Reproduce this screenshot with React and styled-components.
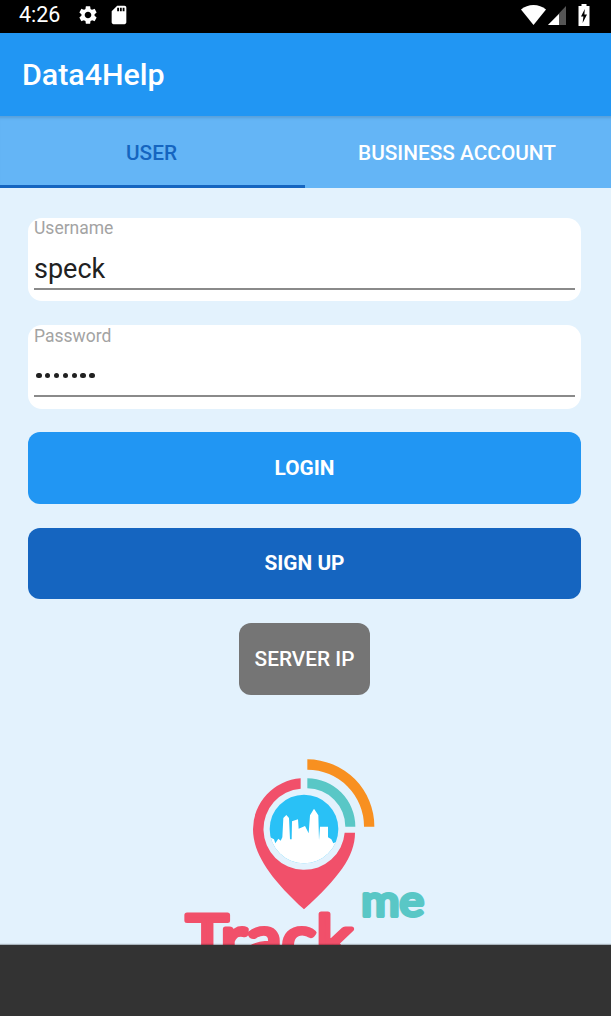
import React from "react";
import styled, { createGlobalStyle } from "styled-components";
import { MdSettings, MdSdCard } from "react-icons/md";

const GlobalStyle = createGlobalStyle`
  html, body {
    margin: 0;
    padding: 0;
    background: #333;
    font-family: Roboto, "Liberation Sans", sans-serif;
  }
  * { box-sizing: border-box; }
`;

const Screen = styled.div`
  width: 611px;
  height: 1016px;
  display: flex;
  flex-direction: column;
  overflow: hidden;
`;

const StatusBar = styled.div`
  height: 33px;
  flex: none;
  background: #000;
  color: #fff;
  display: flex;
  align-items: center;
  padding: 0 21px 4px 19px;
`;

const Clock = styled.span`
  font-size: 21.5px;
  width: 56px;
`;

const StatusLeft = styled.div`
  display: flex;
  align-items: center;
  gap: 2px;
  flex: 1;
  svg { display: block; }
`;

const StatusRight = styled.div`
  display: flex;
  align-items: center;
  gap: 2px;
  svg { display: block; }
`;

const AppBar = styled.header`
  height: 83px;
  flex: none;
  background: #2196f3;
  color: #fff;
  font-size: 30.4px;
  font-weight: 500;
  display: flex;
  align-items: center;
  padding: 0 22px 0;
`;

const Tabs = styled.nav`
  height: 72px;
  flex: none;
  background: #64b5f6;
  display: grid;
  grid-template-columns: 305px 306px;
  box-shadow: inset 0 4px 3px -2px rgba(0, 0, 0, 0.12);
`;

const Tab = styled.div`
  display: flex;
  align-items: center;
  justify-content: center;
  padding: 4px 2px 0 0;
  font-size: 20.8px;
  font-weight: 500;
  color: ${({ $active }) => ($active ? "#1565c0" : "#fff")};
  border-bottom: 3px solid ${({ $active }) => ($active ? "#1565c0" : "transparent")};
`;

const Content = styled.main`
  flex: 1;
  min-height: 0;
  overflow: hidden;
  background: #e3f2fd;
  padding: 30px 30px 0 28px;
  display: flex;
  flex-direction: column;
  align-items: center;
`;

const Field = styled.div`
  width: 553px;
  flex: none;
  height: ${({ $tall }) => ($tall ? "84px" : "83px")};
  margin-bottom: ${({ $tall }) => ($tall ? "23px" : "24px")};
  background: #fff;
  border-radius: 14px;
  padding: ${({ $tall }) => ($tall ? "1px" : "0")} 6px 0;
`;

const FieldLabel = styled.div`
  font-size: 17.5px;
  line-height: 20px;
  color: #a3a3a3;
`;

const FieldInput = styled.div`
  height: ${({ $tall }) => ($tall ? "51px" : "52px")};
  border-bottom: 2px solid #8a8a8a;
  display: flex;
  align-items: center;
  padding-top: ${({ $tall }) => ($tall ? "10px" : "11px")};
  font-size: 27px;
  color: #212121;
`;

const Dots = styled.div`
  display: flex;
  gap: 3.4px;
  padding-left: 2px;
`;

const Dot = styled.span`
  width: 5.5px;
  height: 5.5px;
  border-radius: 50%;
  background: #212121;
`;

const Button = styled.button`
  display: block;
  flex: none;
  width: ${({ $small }) => ($small ? "131px" : "553px")};
  height: 71.6px;
  margin-bottom: 24px;
  border: none;
  border-radius: 12px;
  background: ${({ $color }) => $color};
  color: #fff;
  font-family: inherit;
  font-size: 20.8px;
  font-weight: ${({ $small }) => ($small ? 500 : 700)};
  padding: 0;
`;

const LogoArt = styled.svg`
  display: block;
  flex: none;
  margin-top: 31px;
  margin-left: 1px;
  overflow: hidden;
`;

const BottomBar = styled.div`
  height: 71px;
  flex: none;
  background: #333;
  box-shadow: 0 -1px 1px rgba(0, 0, 0, 0.25);
  position: relative;
`;

const SignalIcon = () => (
  <svg width="19" height="20" viewBox="0 0 19 20">
    <path d="M18 1V20H0Z" fill="#555" />
    <path d="M11 9V20H0Z" fill="#fff" />
  </svg>
);

const WifiIcon = () => (
  <svg width="25" height="20" viewBox="0 0 25 20">
    <path d="M0 4.5C3.5 1.6 7.8 0 12.5 0S21.5 1.6 25 4.5L12.5 20Z" fill="#fff" />
  </svg>
);

const BatteryIcon = () => (
  <svg width="12" height="22" viewBox="0 0 12 22" style={{ marginLeft: 9 }}>
    <path fillRule="evenodd" fill="#fff" d="M3.5 0H8.5V2H11.5V22H.5V2H3.5ZM6.8 5 3 12.6H5.4L4.6 19 9 10.6H6.4Z" />
  </svg>
);

const TrackMeLogo = () => (
  <LogoArt width="270" height="195" viewBox="0 0 810 585">
    <path
      fill="#f1506a"
      d="M392 85 A153 153 0 0 0 249 238 C249 310 300 385 402 478 C504 385 555 320 555 248 L524 248 A122 122 0 1 1 392 116 Z"
    />
    <circle cx="402" cy="237" r="103" fill="#29c1f6" />
    <clipPath id="city">
      <circle cx="402" cy="237" r="103" />
    </clipPath>
    <path
      clipPath="url(#city)"
      fill="#fff"
      d="M300 262 L312 268 L316 280 L325 266 L332 272 L337 262 L340 204 L349 195 L357 204 L360 268 L365 268 L366 214 L384 208 L386 236 L405 228 L416 250 L420 196 L432 176 L445 196 L447 270 L450 230 L474 230 L474 262 L484 268 L490 280 L510 270 L510 345 L295 345 Z"
    />
    <path fill="#59c7c6" d="M412 85 A145 145 0 0 1 556 230 L526 230 A115 115 0 0 0 412 115 Z" />
    <path fill="#f89020" d="M412 28 A201 201 0 0 1 613 230 L582 230 A170 170 0 0 0 412 59 Z" />
    <text
      x="48"
      y="636"
      fontFamily="Lato, sans-serif"
      fontWeight="400"
      fontSize="200"
      fill="#f1506a"
      stroke="#f1506a"
      strokeWidth="15"
      strokeLinejoin="round"
      textLength="500"
      lengthAdjust="spacingAndGlyphs"
    >
      Track
    </text>
    <text
      x="574"
      y="498"
      fontFamily="Lato, sans-serif"
      fontWeight="400"
      fontSize="130"
      fill="#59c7c6"
      stroke="#59c7c6"
      strokeWidth="12"
      strokeLinejoin="round"
      textLength="188"
      lengthAdjust="spacingAndGlyphs"
    >
      me
    </text>
  </LogoArt>
);

const App = () => {
  return (
    <Screen>
      <GlobalStyle />
      <StatusBar>
        <StatusLeft>
          <Clock>4:26</Clock>
          <MdSettings size={22} />
          <MdSdCard size={22} style={{ marginLeft: 7 }} />
        </StatusLeft>
        <StatusRight>
          <WifiIcon />
          <SignalIcon />
          <BatteryIcon />
        </StatusRight>
      </StatusBar>
      <AppBar>Data4Help</AppBar>
      <Tabs>
        <Tab $active>USER</Tab>
        <Tab>BUSINESS ACCOUNT</Tab>
      </Tabs>
      <Content>
        <Field>
          <FieldLabel>Username</FieldLabel>
          <FieldInput>speck</FieldInput>
        </Field>
        <Field $tall>
          <FieldLabel>Password</FieldLabel>
          <FieldInput $tall>
            <Dots>
              {Array.from({ length: 7 }).map((_, i) => (
                <Dot key={i} />
              ))}
            </Dots>
          </FieldInput>
        </Field>
        <Button $color="#2196f3">LOGIN</Button>
        <Button $color="#1565c0">SIGN UP</Button>
        <Button $color="#757575" $small>SERVER IP</Button>
        <TrackMeLogo />
      </Content>
      <BottomBar />
    </Screen>
  );
};

export default App;
